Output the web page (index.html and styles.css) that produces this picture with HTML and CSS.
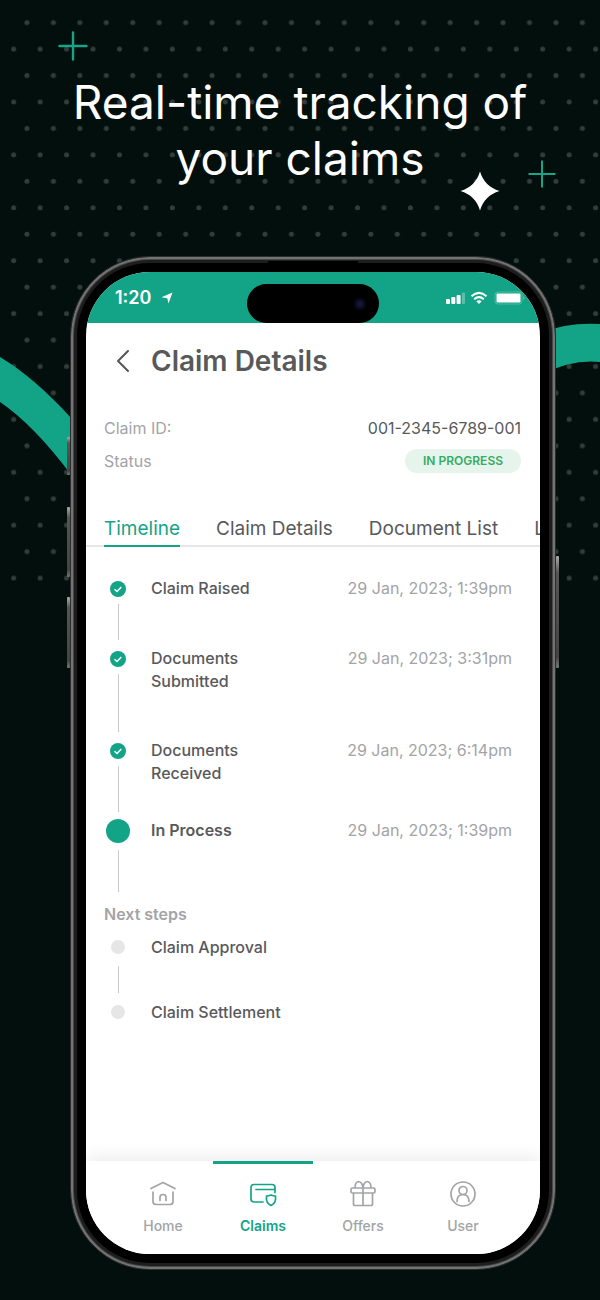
FILE: index.html
```html
<!DOCTYPE html>
<html lang="en">
<head>
  <meta charset="UTF-8">
  <meta name="viewport" content="width=device-width, initial-scale=1">
  <title>Real-time tracking of your claims</title>
  <link rel="stylesheet" href="styles.css">
</head>
<body>
  <div class="page">
    <!-- background decoration -->
    <svg class="dots" aria-hidden="true">
      <defs>
        <pattern id="dotGrid" width="26.45" height="52.9" patternUnits="userSpaceOnUse" x="0.5" y="9.4">
          <circle cx="13.2" cy="39.6" r="2.5" fill="#323d3a"/>
          <circle cx="0" cy="13.2" r="2.5" fill="#323d3a"/>
          <circle cx="26.45" cy="13.2" r="2.5" fill="#323d3a"/>
        </pattern>
      </defs>
      <rect x="8" y="15" width="100%" height="570" fill="url(#dotGrid)"/>
    </svg>
    <svg class="ribbon-left" viewBox="0 0 100 180" aria-hidden="true">
      <path d="M0 37Q35 58 72 99V156Q34 105 0 82Z" fill="#13a487"/>
    </svg>
    <svg class="ribbon-right" viewBox="0 0 60 60" aria-hidden="true">
      <path d="M0 14Q28 3 60 5V43Q32 40 0 56Z" fill="#13a487"/>
    </svg>
    <svg class="plus plus-left" viewBox="0 0 30 30" aria-hidden="true">
      <path d="M15 1.5v27M1.5 15h27" stroke="#17a487" stroke-width="2.4" stroke-linecap="round"/>
    </svg>
    <svg class="plus plus-right" viewBox="0 0 30 30" aria-hidden="true">
      <path d="M15 1.5v27M1.5 15h27" stroke="#17a487" stroke-width="2"/>
    </svg>
    <svg class="sparkle" viewBox="0 0 40 40" aria-hidden="true">
      <path d="M20 0.5Q24.500 15.500 39.500 20Q24.500 24.500 20 39.500Q15.500 24.500 0.500 20Q15.500 15.500 20 0.500Z" fill="#fff"/>
    </svg>

    <h1 class="headline">Real-time tracking of<br>your claims</h1>

    <div class="phone">
      <span class="side-key mute"></span>
      <span class="side-key vol-up"></span>
      <span class="side-key vol-down"></span>
      <span class="side-key power"></span>
      <span class="earpiece"></span>

      <div class="screen">
        <div class="status-bar">
          <div class="status-left">
            <span>1:20</span>
            <svg width="12" height="12" viewBox="0 0 12 12" aria-hidden="true">
              <path d="M11.500 0.500L7.500 11.500L6.300 6.300L0.500 5.200Z" fill="#fff"/>
            </svg>
          </div>
          <div class="island"><span class="camera"></span></div>
          <svg class="status-icons" width="80" height="14" viewBox="0 0 80 14" aria-hidden="true">
            <g fill="#fff">
              <rect x="0" y="8" width="4" height="5" rx="1"/>
              <rect x="5.300" y="6" width="4" height="7" rx="1"/>
              <rect x="10.600" y="4" width="4" height="9" rx="1"/>
              <rect x="16" y="1.500" width="3" height="11.500" rx="1" opacity="0.3"/>
              <path d="M33 13L30.300 10.200Q33 8.200 35.700 10.200Z"/>
            </g>
            <path d="M25.500 5.300Q33 -1.400 40.500 5.300M28.200 8.200Q33 4 37.800 8.200" fill="none" stroke="#fff" stroke-width="2.100"/>
            <rect x="49" y="1" width="27" height="12" rx="3" fill="none" stroke="#fff" opacity="0.25"/>
            <rect x="50.500" y="2.500" width="24" height="9" rx="1" fill="#fff"/>
            <path d="M77.500 5Q79.500 7 77.500 9Z" fill="#fff" opacity="0.4"/>
          </svg>
        </div>

        <header class="title-bar">
          <button class="back" type="button" aria-label="Back">
            <svg width="14" height="24" viewBox="0 0 14 24" fill="none" aria-hidden="true">
              <path d="M12 2L2 12L12 22" stroke="#555658" stroke-width="2" stroke-linecap="round" stroke-linejoin="round"/>
            </svg>
          </button>
          <h2>Claim Details</h2>
        </header>

        <dl class="summary">
          <div class="summary-row">
            <dt>Claim ID:</dt>
            <dd>001-2345-6789-001</dd>
          </div>
          <div class="summary-row">
            <dt>Status</dt>
            <dd><span class="badge">IN PROGRESS</span></dd>
          </div>
        </dl>

        <nav class="tabs">
          <a class="tab active" href="#timeline">Timeline</a>
          <a class="tab" href="#details">Claim Details</a>
          <a class="tab" href="#documents">Document List</a>
          <a class="tab" href="#letters">L</a>
        </nav>

        <main class="content" id="timeline">
          <ol class="timeline">
            <li class="step">
              <div class="track">
                <svg class="check" viewBox="0 0 16 16" aria-hidden="true">
                  <circle cx="8" cy="8" r="8" fill="#13a487"/>
                  <path d="M4.500 8.300L7 10.500L11.300 6" fill="none" stroke="#fff" stroke-width="1.500"/>
                </svg>
              </div>
              <span class="label">Claim Raised</span>
              <time>29 Jan, 2023; 1:39pm</time>
            </li>
            <li class="step tall">
              <div class="track">
                <svg class="check" viewBox="0 0 16 16" aria-hidden="true">
                  <circle cx="8" cy="8" r="8" fill="#13a487"/>
                  <path d="M4.500 8.300L7 10.500L11.300 6" fill="none" stroke="#fff" stroke-width="1.500"/>
                </svg>
              </div>
              <span class="label">Documents Submitted</span>
              <time>29 Jan, 2023; 3:31pm</time>
            </li>
            <li class="step">
              <div class="track">
                <svg class="check" viewBox="0 0 16 16" aria-hidden="true">
                  <circle cx="8" cy="8" r="8" fill="#13a487"/>
                  <path d="M4.500 8.300L7 10.500L11.300 6" fill="none" stroke="#fff" stroke-width="1.500"/>
                </svg>
              </div>
              <span class="label">Documents Received</span>
              <time>29 Jan, 2023; 6:14pm</time>
            </li>
            <li class="step current">
              <div class="track"><span class="dot"></span></div>
              <span class="label">In Process</span>
              <time>29 Jan, 2023; 1:39pm</time>
            </li>
          </ol>

          <h3>Next steps</h3>
          <ol class="timeline upcoming">
            <li class="step">
              <div class="track"><span class="dot"></span></div>
              <span class="label">Claim Approval</span>
            </li>
            <li class="step">
              <div class="track"><span class="dot"></span></div>
              <span class="label">Claim Settlement</span>
            </li>
          </ol>
        </main>

        <nav class="bottom-nav">
          <a href="#home">
            <svg viewBox="0 0 28 28" aria-hidden="true">
              <path d="M2 8.500L14 2.500L26 8.500M4 12V21.500Q4 24.500 7 24.500H21Q24 24.500 24 21.500V12M11 20.500V17Q11 14.500 14 14.500T17 17V20.500"/>
            </svg>
            Home
          </a>
          <a class="active" href="#claims">
            <svg viewBox="0 0 28 28" aria-hidden="true">
              <path d="M14 22H5Q2 22 2 19V7.500Q2 4.500 5 4.500H23Q26 4.500 26 7.500V12.500M7 9.500H26M22 15Q24 16 26.500 16V19.500Q26 23.500 22 25.500Q18 23.500 17.500 19.500V16Q20 16 22 15Z"/>
            </svg>
            Claims
          </a>
          <a href="#offers">
            <svg viewBox="0 0 28 28" aria-hidden="true">
              <path d="M3.500 8H24.500Q26 8 26 9.500V11.500Q26 13 24.500 13H3.500Q2 13 2 11.500V9.500Q2 8 3.500 8ZM4.500 13V24.500Q4.500 25.500 6 25.500H22Q23.500 25.500 23.500 24.500V13M14 8V25.500M14 8Q13.500 2 9.500 1.500Q6 2 6 8M14 8Q14.500 2 18.500 1.500Q22 2 22 8"/>
            </svg>
            Offers
          </a>
          <a href="#user">
            <svg viewBox="0 0 28 28" aria-hidden="true">
              <circle cx="14" cy="14" r="12"/>
              <circle cx="14" cy="10.500" r="4"/>
              <path d="M8 21.500Q8 14.500 14 14.500T20 21.500"/>
            </svg>
            User
          </a>
        </nav>
      </div>
    </div>
  </div>
</body>
</html>
```
FILE: styles.css
```css
* {
  box-sizing: border-box;
}

body {
  margin: 0;
  background: #020f0c;
  font-family: Inter, "Liberation Sans", sans-serif;
  color: #58595b;
}

h1, h2, h3, dl, dd, ol {
  margin: 0;
  padding: 0;
}

a {
  color: inherit;
  text-decoration: none;
}

.page {
  position: relative;
  display: flex;
  flex-direction: column;
  min-height: 100vh;
  padding: 74px 44px 30px;
  overflow: hidden;
}

/* background decoration */
.dots {
  position: absolute;
  top: 0;
  left: 0;
  width: 100%;
  height: 600px;
}

.ribbon-left {
  position: absolute;
  top: 320px;
  left: 0;
  width: 100px;
  height: 180px;
}

.ribbon-right {
  position: absolute;
  top: 319px;
  right: 0;
  width: 60px;
  height: 60px;
}

.plus {
  position: absolute;
  width: 30px;
  height: 30px;
}

.plus-left {
  top: 31px;
  left: 58px;
}

.plus-right {
  top: 159px;
  right: 43px;
}

.sparkle {
  position: absolute;
  top: 171px;
  right: 100px;
  width: 40px;
  height: 40px;
}

.headline {
  position: relative;
  margin-bottom: 70px;
  font-size: 46px;
  font-weight: 400;
  line-height: 56px;
  text-align: center;
  color: #fff;
}

/* phone */
.phone {
  position: relative;
  flex: 1;
  display: flex;
  margin-left: 26px;
  padding: 15px;
  border-radius: 80px;
  background: #000;
  border: 1px solid #2c2d2d;
  box-shadow: inset 0 0 0 2px #727373, inset 0 0 0 3px #484849, inset 0 0 0 6px #1d1d1e;
}

.side-key {
  position: absolute;
  left: -4px;
  width: 3px;
  background: linear-gradient(#aaa, #555 15%, #444 90%, #777);
  border-radius: 1px;
}

.mute {
  top: 180px;
  height: 38px;
}

.vol-up {
  top: 250px;
  height: 70px;
}

.vol-down {
  top: 340px;
  height: 71px;
}

.power {
  top: 299px;
  left: auto;
  right: -4px;
  height: 112px;
}

.earpiece {
  position: absolute;
  top: 4px;
  left: 50%;
  width: 90px;
  height: 3px;
  margin-left: -45px;
  background: #000;
}

.screen {
  flex: 1;
  min-width: 0;
  display: flex;
  flex-direction: column;
  border-radius: 64px;
  overflow: hidden;
  background: #fff;
}

.status-bar {
  display: grid;
  grid-template-columns: 1fr 132px 1fr;
  align-items: center;
  height: 51px;
  background: #13a487;
  color: #fff;
  font-size: 18px;
  font-weight: 600;
}

.status-left {
  display: flex;
  align-items: center;
  gap: 10px;
  padding-left: 29px;
}

.island {
  align-self: end;
  display: flex;
  align-items: center;
  justify-content: flex-end;
  height: 39px;
  padding-right: 13px;
  border-radius: 20px;
  background: #000;
}

.camera {
  width: 12px;
  height: 12px;
  border-radius: 50%;
  background: radial-gradient(#1b1b48, #0a0a1c 50%, #020204);
}

.status-icons {
  justify-self: end;
  margin-right: 14px;
}

/* claim header */
.title-bar {
  display: flex;
  align-items: center;
  gap: 21px;
  padding: 20px 18px 0 30px;
}

.back {
  display: flex;
  padding: 0;
  border: 0;
  background: none;
  cursor: pointer;
}

.title-bar h2 {
  font-size: 28px;
  font-weight: 600;
  line-height: 36px;
}

.summary {
  display: flex;
  flex-direction: column;
  gap: 9px;
  padding: 37px 19px 0 18px;
  font-size: 16px;
  line-height: 24px;
}

.summary-row {
  display: flex;
  align-items: center;
  justify-content: space-between;
}

.summary dt {
  color: #a3a4a6;
}

.badge {
  display: block;
  padding: 0 18px;
  border-radius: 12px;
  background: #e6f5ec;
  color: #37ab63;
  font-size: 12px;
  font-weight: 600;
}

.tabs {
  display: flex;
  gap: 36px;
  margin-top: 42px;
  padding-left: 18px;
  overflow: hidden;
  box-shadow: inset 0 -2px #e6e6e7;
  white-space: nowrap;
}

.tab {
  padding-bottom: 4px;
  font-size: 19px;
  line-height: 28px;
}

.tab.active {
  color: #13a487;
  box-shadow: inset 0 -2px #13a487;
}

/* timeline */
.content {
  flex: 1;
  padding: 30px 28px 48px 18px;
}

.timeline {
  list-style: none;
}

.step {
  display: flex;
  align-items: stretch;
  min-height: 80px;
  font-size: 16px;
  line-height: 23px;
}

.step:first-child {
  min-height: 70px;
}

.step.tall {
  min-height: 92px;
}

.track {
  display: flex;
  flex-direction: column;
  align-items: center;
  width: 28px;
  margin-right: 19px;
  padding-top: 4px;
}

.track::after {
  content: "";
  flex: 1;
  width: 1px;
  margin: 7px 0;
  background: #c9cacb;
}

.check {
  width: 16px;
  height: 16px;
}

.label {
  width: 130px;
  font-weight: 500;
}

.step time {
  margin-left: auto;
  color: #a3a4a6;
}

.current .track {
  padding-top: 0;
}

.current .dot {
  width: 24px;
  height: 24px;
  border-radius: 50%;
  background: #13a487;
}

.current .label {
  font-weight: 600;
}

.content h3 {
  margin: 4px 0 10px;
  font-size: 16px;
  font-weight: 600;
  line-height: 23px;
  color: #a3a4a6;
}

.upcoming .step {
  min-height: 65px;
}

.upcoming .step:last-child {
  min-height: 23px;
}

.upcoming .label {
  width: auto;
}

.upcoming .dot {
  width: 14px;
  height: 14px;
  border-radius: 50%;
  background: #e6e6e7;
}

.upcoming .track::after {
  margin: 12px 0 8px;
}

.upcoming .step:last-child .track::after {
  display: none;
}

/* bottom navigation */
.bottom-nav {
  position: relative;
  display: flex;
  height: 93px;
  padding: 0 27px;
  background: #fff;
  box-shadow: 0 -4px 16px rgba(0, 0, 0, 0.08);
}

.bottom-nav a {
  flex: 1;
  display: flex;
  flex-direction: column;
  align-items: center;
  gap: 8px;
  padding-top: 16px;
  border-top: 3px solid transparent;
  color: #a3a4a6;
  font-size: 14px;
  font-weight: 500;
  line-height: 20px;
}

.bottom-nav svg {
  width: 28px;
  height: 28px;
  fill: none;
  stroke: currentColor;
  stroke-width: 1.7;
  stroke-linecap: round;
  stroke-linejoin: round;
}

.bottom-nav a.active {
  border-top-color: #13a487;
  color: #13a487;
  font-weight: 600;
}
```
